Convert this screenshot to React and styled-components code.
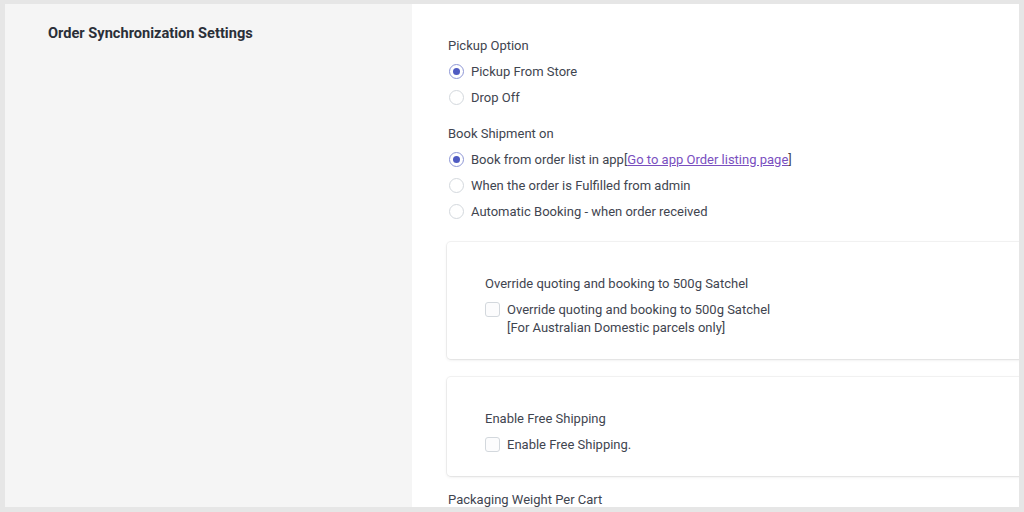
import React from "react";
import styled, { createGlobalStyle } from "styled-components";

const Global = createGlobalStyle`
  html, body { margin: 0; padding: 0; background: #e6e6e6; }
  body { font-family: Roboto, "Liberation Sans", Arial, sans-serif; }
  * { box-sizing: border-box; }
`;

const Frame = styled.div`
  width: 1024px;
  height: 512px;
  padding: 4px 5px 5px 5px;
  background: #e6e6e6;
  display: flex;
  overflow: hidden;
`;

const Aside = styled.div`
  width: 407px;
  flex: none;
  background: #f5f5f5;
  padding: 19px 0 0 43px;
`;

const Heading = styled.h2`
  margin: 0;
  font-size: 14.6px;
  line-height: 20px;
  font-weight: 700;
  color: #2a2f38;
`;

const Main = styled.div`
  flex: 1;
  background: #fff;
  padding: 32px 0 0 36px;
  overflow: hidden;
  display: flex;
  flex-direction: column;
`;

const Group = styled.div`
  display: flex;
  flex-direction: column;
  margin-bottom: ${(p) => p.$mb || 0}px;
`;

const Label = styled.div`
  font-size: 13px;
  line-height: 20px;
  color: #3f4550;
  margin-bottom: 2px;
`;

const OptionRow = styled.label`
  display: flex;
  align-items: center;
  height: 26px;
  font-size: 13px;
  color: #3f4550;
  gap: 7px;
`;

const Radio = styled.span`
  width: 15px;
  height: 15px;
  margin-left: 1px;
  border-radius: 50%;
  border: 1px solid ${(p) => (p.$checked ? "#8e97d6" : "#d3d8dd")};
  background: #fff;
  display: flex;
  align-items: center;
  justify-content: center;
  flex: none;
  &::after {
    content: "";
    width: 7px;
    height: 7px;
    border-radius: 50%;
    background: ${(p) => (p.$checked ? "#4f5bc2" : "transparent")};
  }
`;

const Link = styled.a`
  color: #7a4fbf;
  text-decoration: underline;
`;

const Card = styled.div`
  margin: 0 -60px ${(p) => p.$mb || 0}px -1px;
  border-radius: 4px;
  background: #fff;
  box-shadow: 0 0 0 1px rgba(63, 63, 68, 0.06), 0 1px 3px 0 rgba(63, 63, 68, 0.12);
  padding: 32px 0 22px 38px;
  display: flex;
  flex-direction: column;
`;

const CardLabel = styled.div`
  font-size: 13px;
  line-height: 20px;
  color: #3f4550;
  margin-bottom: 7px;
`;

const CheckRow = styled.label`
  display: flex;
  align-items: flex-start;
  gap: 7px;
  font-size: 13px;
  line-height: 18px;
  color: #3f4550;
`;

const Box = styled.span`
  width: 15px;
  height: 15px;
  margin-top: 1px;
  flex: none;
  border: 1px solid #d3d8dd;
  border-radius: 3px;
  background: #fcfcfd;
`;

const Plain = styled.div`
  font-size: 13px;
  line-height: 20px;
  color: #3f4550;
`;

const RadioGroup = ({ title, options, mb }) => (
  <Group $mb={mb}>
    <Label>{title}</Label>
    {options.map((o, i) => (
      <OptionRow key={i}>
        <Radio $checked={o.checked} />
        <span>{o.label}</span>
      </OptionRow>
    ))}
  </Group>
);

export default function App() {
  return (
    <>
      <Global />
      <Frame>
        <Aside>
          <Heading>Order Synchronization Settings</Heading>
        </Aside>
        <Main>
          <RadioGroup
            title="Pickup Option"
            mb={14}
            options={[
              { label: "Pickup From Store", checked: true },
              { label: "Drop Off" },
            ]}
          />
          <RadioGroup
            title="Book Shipment on"
            mb={18}
            options={[
              {
                label: (
                  <>
                    Book from order list in app[
                    <Link href="#">Go to app Order listing page</Link>]
                  </>
                ),
                checked: true,
              },
              { label: "When the order is Fulfilled from admin" },
              { label: "Automatic Booking - when order received" },
            ]}
          />
          <Card $mb={18}>
            <CardLabel>Override quoting and booking to 500g Satchel</CardLabel>
            <CheckRow>
              <Box />
              <span>
                Override quoting and booking to 500g Satchel
                <br />
                [For Australian Domestic parcels only]
              </span>
            </CheckRow>
          </Card>
          <Card $mb={14}>
            <CardLabel>Enable Free Shipping</CardLabel>
            <CheckRow>
              <Box />
              <span>Enable Free Shipping.</span>
            </CheckRow>
          </Card>
          <Plain>Packaging Weight Per Cart</Plain>
        </Main>
      </Frame>
    </>
  );
}
